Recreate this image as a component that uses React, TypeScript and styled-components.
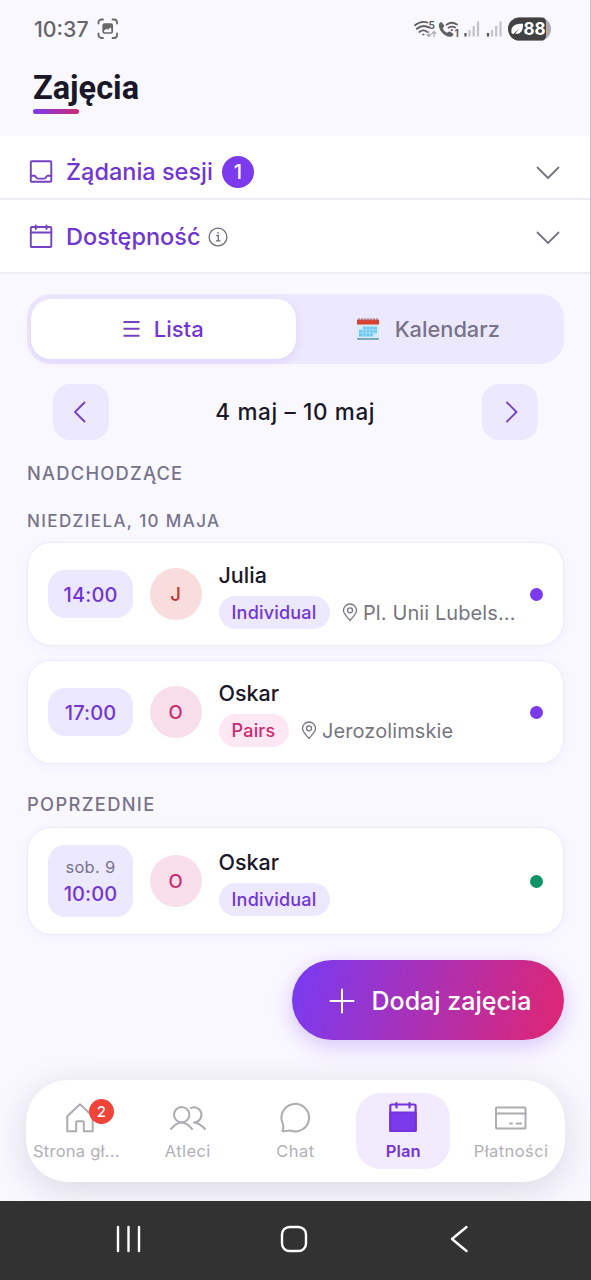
import React from 'react';
import styled, { createGlobalStyle, css } from 'styled-components';

const violet = '#7136d2';
const ink = '#1a1828';
const muted = '#77738a';
const lilac = '#ece8fd';

const GlobalStyle = createGlobalStyle`
  * { box-sizing: border-box; }
  body { margin: 0; background: #f9f8ff; font-family: Inter, "Noto Sans", sans-serif; }
`;

const Screen = styled.div`
  width: 591px;
  height: 1280px;
  display: flex;
  flex-direction: column;
  overflow: hidden;
`;

const AppArea = styled.div`
  height: 1201px;
  flex: none;
  display: flex;
  flex-direction: column;
  background: #f9f8ff;
  border-right: 1px solid #c3c1cc;
  overflow: hidden;
`;

interface TextProps {
  $size: number;
  $weight?: number;
  $spacing?: number;
  $color?: string;
  $line?: number;
}

const Text = styled.span<TextProps>`
  font-size: ${p => p.$size}px;
  font-weight: ${p => p.$weight ?? 500};
  letter-spacing: ${p => p.$spacing ?? 0}px;
  color: ${p => p.$color ?? ink};
  line-height: ${p => p.$line ?? 28}px;
  white-space: nowrap;
`;

const StatusBar = styled.div`
  height: 57px;
  flex: none;
  padding: 0 38px 0 34px;
  display: flex;
  align-items: center;
  justify-content: space-between;
`;

const StatusGroup = styled.div`
  display: flex;
  align-items: center;
  gap: 8px;
`;

const Header = styled.header`
  height: 79px;
  flex: none;
  padding: 11px 0 0 33px;
`;

const Title = styled.h1`
  margin: 0;
  font: 700 32.5px/40px Roboto, sans-serif;
  color: ${ink};
`;

const TitleRule = styled.div`
  width: 46px;
  height: 5px;
  margin-top: 1px;
  border-radius: 3px;
  background: linear-gradient(90deg, #7c3aed, #cf2a74);
`;

const Panel = styled.section`
  flex: none;
  height: 138px;
  background: #fff;
  border-bottom: 2px solid #ededf4;
`;

const PanelRow = styled.div<{ $first?: boolean }>`
  display: flex;
  align-items: center;
  padding: 0 30px 0 29px;
  height: ${p => (p.$first ? 64 : 72)}px;
  ${p => (p.$first ? css`padding-top: 10px; border-bottom: 2px solid #ededf4;` : css`padding-top: 1px;`)}
`;

const RowIcon = styled.div`
  width: 37px;
  height: 26px;
`;

const InfoSlot = styled.div`
  display: flex;
  margin-left: 8px;
`;

const Count = styled.span`
  width: 32px;
  height: 32px;
  margin-left: 9px;
  border-radius: 50%;
  background: #7c3aed;
  display: flex;
  align-items: center;
  justify-content: center;
`;

const PushRight = styled.div`
  margin-left: auto;
  padding-top: 2px;
  display: flex;
`;

const Content = styled.main`
  flex: none;
  display: flex;
  flex-direction: column;
  padding: 20px 26px 0 27px;
`;

const Segmented = styled.div`
  height: 70px;
  display: flex;
  padding: 5px 4px;
  border-radius: 24px;
  background: ${lilac};
`;

const Segment = styled.div<{ $active?: boolean; $gap: number }>`
  flex: 1;
  height: 60px;
  display: flex;
  align-items: center;
  justify-content: center;
  gap: ${p => p.$gap}px;
  border-radius: 20px;
  ${p => p.$active && css`
    background: #fff;
    box-shadow: 0 3px 10px rgba(124, 58, 237, 0.11);
  `}
`;

const WeekNav = styled.div`
  display: flex;
  align-items: center;
  justify-content: space-between;
  margin-top: 20px;
  padding: 0 26px 0 25.5px;
`;

const WeekButton = styled.div`
  width: 56px;
  height: 56px;
  border-radius: 17px;
  background: ${lilac};
  display: flex;
  align-items: center;
  justify-content: center;
`;

const SectionLabel = styled.div<{ $top: number; $height: number }>`
  margin-top: ${p => p.$top}px;
  height: ${p => p.$height}px;
  display: flex;
  align-items: center;
`;

const Card = styled.article<{ $top: number; $height?: number }>`
  margin-top: ${p => p.$top}px;
  height: ${p => p.$height ?? 104}px;
  display: flex;
  align-items: center;
  padding: 0 20px 0 20px;
  border: 1.5px solid #eeebf8;
  border-radius: 24px;
  background: #fff;
  box-shadow: 0 2px 12px rgba(124, 58, 237, 0.05);
`;

const TimeChip = styled.div<{ $tall?: boolean }>`
  width: 85px;
  height: ${p => (p.$tall ? 72 : 48)}px;
  flex: none;
  padding-top: ${p => (p.$tall ? 0 : 2)}px;
  border-radius: 17px;
  background: ${lilac};
  display: flex;
  flex-direction: column;
  align-items: center;
  justify-content: center;
`;

const Avatar = styled.div<{ $bg: string }>`
  width: 52px;
  height: 52px;
  flex: none;
  margin: 0 17px 0 16.5px;
  border-radius: 50%;
  background: ${p => p.$bg};
  display: flex;
  align-items: center;
  justify-content: center;
`;

const Details = styled.div`
  display: flex;
  flex-direction: column;
  gap: 7px;
  padding-top: 2px;
`;

const Meta = styled.div`
  display: flex;
  align-items: center;
`;

const Tag = styled.span<{ $pink?: boolean }>`
  height: 33px;
  padding-top: 1px;
  width: ${p => (p.$pink ? 70 : 111)}px;
  border-radius: 17px;
  display: flex;
  align-items: center;
  justify-content: center;
  background: ${p => (p.$pink ? '#fce7f3' : lilac)};
`;

const Place = styled.span`
  margin-left: 12px;
  display: flex;
  align-items: center;
  gap: 5.5px;
`;

const Dot = styled.span<{ $color: string }>`
  width: 13px;
  height: 13px;
  margin-left: auto;
  border-radius: 50%;
  background: ${p => p.$color};
`;

const AddButton = styled.div`
  align-self: flex-end;
  width: 272px;
  height: 80px;
  margin-top: 25px;
  border-radius: 40px;
  display: flex;
  align-items: center;
  padding: 1px 0 0 37px;
  gap: 16.5px;
  background: linear-gradient(105deg, #7c3aed 5%, #db2777 95%);
  box-shadow: 0 6px 22px rgba(124, 58, 237, 0.28);
`;

const TabBar = styled.nav`
  flex: none;
  width: 539px;
  height: 102px;
  margin: 40px 0 0 26px;
  border-radius: 42px;
  background: #fff;
  box-shadow: 0 8px 36px rgba(30, 28, 40, 0.14);
  display: flex;
  align-items: center;
`;

const TabCell = styled.div`
  flex: 1;
  display: flex;
  justify-content: center;
`;

const TabItem = styled.div<{ $active?: boolean }>`
  width: 94px;
  height: 76px;
  border-radius: 25px;
  background: ${p => (p.$active ? '#f2eafd' : 'transparent')};
  display: flex;
  flex-direction: column;
  align-items: center;
  padding-top: 7px;
  gap: 5px;
`;

const TabLabel = styled(Text)<{ $trail?: number }>`
  padding-right: ${p => p.$trail ?? 0}px;
`;

const TabIcon = styled.div`
  position: relative;
  height: 36px;
`;

const TabBadge = styled.span`
  position: absolute;
  left: 27px;
  top: -1px;
  width: 25px;
  height: 25px;
  border-radius: 50%;
  background: #f04438;
  display: flex;
  align-items: center;
  justify-content: center;
`;

const SystemNav = styled.div`
  height: 79px;
  flex: none;
  background: #323232;
  display: grid;
  grid-template-columns: 167px 163px auto;
  align-items: center;
  padding: 0 0 3px 113px;
`;

const Chevron = ({ d, w, h, color, stroke }: { d: string; w: number; h: number; color: string; stroke: number }) => (
  <svg width={w} height={h} viewBox={`0 0 ${w} ${h}`} fill="none" stroke={color} strokeWidth={stroke} strokeLinecap="round" strokeLinejoin="round">
    <path d={d} />
  </svg>
);

const CaptureIcon = () => (
  <svg width="22" height="22" viewBox="0 0 22 22" fill="none" stroke="#686868" strokeWidth="1.8" strokeLinecap="round">
    <path d="M1.500 5.500V4.500a3 3 0 0 1 3-3H6M15.500 1.500h1.500a3 3 0 0 1 3 3v1M20 15.500v1.500a3 3 0 0 1-3 3H15.500M6 20H4.500a3 3 0 0 1-3-3v-1.500" />
    <rect x="6.200" y="6.200" width="9" height="8.800" rx="1.300" strokeWidth="1.700" />
    <path d="M6.500 6.500h9v5l-2.300-2-2.100 2.300-1.500-1.100-3.100 2.300z" fill="#686868" stroke="none" />
  </svg>
);

const StatusIcons = () => (
  <svg width="139" height="26" viewBox="413 15.500 139 26" fill="none" strokeLinecap="round">
    <g stroke="#606060" strokeWidth="1.8">
      <path d="M415 24.800q6-5 12.500-2.800M416.800 28.300q6-5 12.500-1.200M419.300 31.500q4-3.200 8 0" />
      <circle cx="423.200" cy="34" r=".6" fill="#606060" strokeWidth="1" />
    </g>
    <text x="428.500" y="28.300" fontSize="10" fontWeight="700" fill="#606060" fontFamily="Inter">5</text>
    <path d="M428.800 31v5m-2-2 2 2 2-2M434 36v-5m-2 2 2-2 2 2" stroke="#b0b0b4" strokeWidth="1.3" />
    <path d="M441.500 21.500c-2 .2-3 2-2.500 4.500 1 5.500 6 10 10.500 10.300 2.100.1 3.900-1.200 3.900-2.900l-3.800-2.600-2.500 1.500c-1.900-1-3.600-2.700-4.300-4.600l1.700-2.400z" fill="#606060" />
    <path d="M446.500 24.300q5-4 10.500-.3M448.500 27.300q3.300-2.300 6.600-.2" stroke="#606060" strokeWidth="1.8" />
    <circle cx="451.800" cy="29.600" r="1.100" fill="#606060" />
    <text x="454.500" y="36.800" fontSize="10" fontWeight="700" fill="#606060" fontFamily="Inter">1</text>
    <g strokeWidth="2.200" strokeLinecap="butt">
      <path d="M465.500 32.500v3.500M488 32.500v3.500" stroke="#555" />
      <path d="M469.500 29.500V36M473.700 25.500V36M478 21V36M492 29.500V36M496.200 25.500V36M500.500 21V36" stroke="#c2c2c8" />
    </g>
    <rect x="508" y="17" width="43" height="23" rx="11.500" fill="#aaaab0" />
    <path d="M519.500 17H543q3 1 3 5v13q0 4-3 5h-23.500a11.500 11.500 0 0 1 0-23z" fill="#424242" />
    <path d="M511.500 32.500c-1-7.500 4-9.500 11.500-9.300.3 7-2.500 11-8 10l4.500-5.500-6.500 6z" fill="#fff" />
    <text x="523.500" y="34.800" fontSize="17" fontWeight="700" fill="#fff" fontFamily="Inter" textLength="22">88</text>
  </svg>
);

const InboxIcon = () => (
  <svg width="24" height="24" viewBox="0 0 24 24" fill="none" stroke="#7541c4" strokeWidth="1.9" strokeLinejoin="round">
    <rect x="1.800" y="2.300" width="20.500" height="20.500" rx="1" />
    <path d="M1.800 16.700h3.700c1.400 0 1.400 2.900 3.500 2.900h6.100c2.100 0 2.100-2.900 3.500-2.900h3.700" />
  </svg>
);

const CalendarIcon = () => (
  <svg width="24" height="25" viewBox="0 0 24 25" fill="none" stroke="#7541c4" strokeWidth="1.9" strokeLinejoin="round" strokeLinecap="round">
    <rect x="1.800" y="3" width="20.500" height="20" rx="1" />
    <path d="M1.800 8.500h20.500M6.800 1.500v3.500M17.500 1.500v3.500" />
  </svg>
);

const InfoIcon = () => (
  <svg width="20" height="20" viewBox="0 0 20 20" fill="none" stroke="#6f6d78" strokeWidth="1.3">
    <circle cx="10" cy="10" r="8.900" />
    <path d="M8.300 8.500h2v5.200M8 13.900h4.600" />
    <circle cx="10" cy="5.800" r=".9" fill="#6f6d78" stroke="none" />
  </svg>
);

const MenuIcon = () => (
  <svg width="17" height="18" viewBox="0 0 17 18" stroke="#7541c4" strokeWidth="2.1">
    <path d="M.5 2h16M.5 8.800h16M.5 15.700h16" />
  </svg>
);

const SpiralCalendar = () => (
  <svg width="24" height="24" viewBox="0 0 24 24">
    <path d="M1.500 6h21l.5 15.500a1 1 0 0 1-1 1H2a1 1 0 0 1-1-1z" fill="#d5ecf7" />
    <path d="M1 21.300h22v.4a1 1 0 0 1-1 1H2a1 1 0 0 1-1-1z" fill="#5d93a6" />
    <path d="M1.500 2.500h21q.5 0 .5.500v4.500H1V3q0-.5.500-.5z" fill="#d8412f" />
    <path d="M3 1v2.600M6 1v2.600M9 1v2.600M12 1v2.600M15 1v2.600M18 1v2.600M21 1v2.600" stroke="#8b7480" strokeWidth="1" />
    <path d="M7 9.500h14v7H7zM3 12.500h4v7H3zM7 16h10v3.500H7z" fill="#6cc8f0" />
    <path d="M3 12.700h18M3 16h18M6.800 9v11M10.300 9v11M13.800 9v11M17.300 9v11" stroke="#c3e8f8" strokeWidth=".6" />
  </svg>
);

const PinIcon = () => (
  <svg width="16" height="20" viewBox="0 0 16 20" fill="none" stroke="#77757f" strokeWidth="1.3" strokeLinejoin="round">
    <path d="M8 17.500C5.500 14.500 1.500 10.800 1.500 7.500a6.500 6.500 0 0 1 13 0C14.500 10.800 10.500 14.500 8 17.500z" />
    <circle cx="8" cy="7.300" r="2.500" />
  </svg>
);

const PlusIcon = () => (
  <svg width="26" height="26" viewBox="0 0 26 26" stroke="#fff" strokeWidth="2" strokeLinecap="round">
    <path d="M13 1.500v23M1.500 13h23" />
  </svg>
);

const tabStroke = { fill: 'none', stroke: '#acacb2', strokeWidth: 2, strokeLinejoin: 'round' as const, strokeLinecap: 'round' as const };

const HomeIcon = () => (
  <svg width="36" height="36" viewBox="0 0 36 36" {...tabStroke}>
    <path d="M5.300 16.300 18 4.200l12.700 12.100v15h-8.900v-9q0-1-1-1h-5.600q-1 0-1 1v9H5.300z" />
  </svg>
);

const PeopleIcon = () => (
  <svg width="38" height="36" viewBox="0 0 38 36" {...tabStroke}>
    <circle cx="12.700" cy="14.700" r="7.700" />
    <path d="M2 29q10.500-13 21 0M21.800 8.100a7.500 7.500 0 1 1 3.200 14.300q6 .8 11 6.600" />
  </svg>
);

const ChatIcon = () => (
  <svg width="36" height="36" viewBox="0 0 36 36" {...tabStroke}>
    <path d="M5.300 31c1.300-2.300 1.400-4.600.7-7A13.800 13.800 0 1 1 14 30.800c-3-.9-5.800 1-8.700.2z" />
  </svg>
);

const PlanIcon = () => (
  <svg width="36" height="36" viewBox="0 0 36 36" fill="none" stroke="#7433dc" strokeWidth="2.2" strokeLinejoin="round" strokeLinecap="round">
    <rect x="5.300" y="4.500" width="25.300" height="26.500" rx="1.500" />
    <path d="M5.300 12.500h25.300V31H5.300z" fill="#7c3aed" />
    <path d="M11.500 3v4.500M24.500 3v4.500" />
  </svg>
);

const CardIcon = () => (
  <svg width="36" height="36" viewBox="0 0 36 36" {...tabStroke}>
    <rect x="3" y="7.500" width="29.500" height="21" rx=".8" />
    <path d="M3 13.500h29.500M17 23.500h2M23.500 23.500h4.500" />
  </svg>
);

const tabs = [
  { label: 'Strona gł...', icon: <HomeIcon />, badge: '2', spacing: 0.25, trail: 7 },
  { label: 'Atleci', icon: <PeopleIcon />, spacing: 0.4 },
  { label: 'Chat', icon: <ChatIcon />, spacing: 0.5 },
  { label: 'Plan', icon: <PlanIcon />, active: true, spacing: 0.1 },
  { label: 'Płatności', icon: <CardIcon />, spacing: 0.4 },
];

interface Session {
  day?: string;
  time: string;
  name: string;
  pair?: boolean;
  place?: string;
  top: number;
  height?: number;
  dot: string;
}

const SessionCard = ({ s }: { s: Session }) => (
  <Card $top={s.top} $height={s.height}>
    <TimeChip $tall={!!s.day}>
      {s.day && <Text $size={16.5} $weight={400} $spacing={0.3} $line={25} $color={muted}>{s.day}</Text>}
      <Text $size={20} $spacing={0.1} $line={28} $color={violet}>{s.time}</Text>
    </TimeChip>
    <Avatar $bg={s.name === 'Julia' ? '#f9dddd' : '#f9dfea'}>
      <Text $size={18.5} $color={s.name === 'Julia' ? '#c03238' : '#c92c72'}>{s.name[0]}</Text>
    </Avatar>
    <Details>
      <Text $size={21.5}>{s.name}</Text>
      <Meta>
        <Tag $pink={s.pair}>
          <Text $size={18} $spacing={0.2} $color={s.pair ? '#cb2a70' : violet}>{s.pair ? 'Pairs' : 'Individual'}</Text>
        </Tag>
        {s.place && (
          <Place>
            <PinIcon />
            <Text $size={20} $weight={400} $spacing={0.1} $color="#77757f">{s.place}</Text>
          </Place>
        )}
      </Meta>
    </Details>
    <Dot $color={s.dot} />
  </Card>
);

export default function App() {
  return (
    <Screen>
      <GlobalStyle />
      <AppArea>
        <StatusBar>
          <StatusGroup>
            <Text $size={21.3} $color="#666568">10:37</Text>
            <CaptureIcon />
          </StatusGroup>
          <StatusIcons />
        </StatusBar>
        <Header>
          <Title>Zajęcia</Title>
          <TitleRule />
        </Header>
        <Panel>
          <PanelRow $first>
            <RowIcon><InboxIcon /></RowIcon>
            <Text $size={23.5} $color={violet}>Żądania sesji</Text>
            <Count><Text $size={20} $color="#fff">1</Text></Count>
            <PushRight><Chevron d="M1.500 1.500 12 12 22.500 1.500" w={24} h={14} color="#77757f" stroke={1.8} /></PushRight>
          </PanelRow>
          <PanelRow>
            <RowIcon><CalendarIcon /></RowIcon>
            <Text $size={23.5} $color={violet}>Dostępność</Text>
            <InfoSlot><InfoIcon /></InfoSlot>
            <PushRight><Chevron d="M1.500 1.500 12 12 22.500 1.500" w={24} h={14} color="#77757f" stroke={1.8} /></PushRight>
          </PanelRow>
        </Panel>
        <Content>
          <Segmented>
            <Segment $active $gap={14}>
              <MenuIcon />
              <Text $size={22} $color={violet}>Lista</Text>
            </Segment>
            <Segment $gap={15}>
              <SpiralCalendar />
              <Text $size={21.8} $color={muted}>Kalendarz</Text>
            </Segment>
          </Segmented>
          <WeekNav>
            <WeekButton><Chevron d="M11.500 1.500 2 11l9.500 9.500" w={15} h={22} color="#7541c4" stroke={1.9} /></WeekButton>
            <Text $size={22.5} $spacing={0.65}>4 maj – 10 maj</Text>
            <WeekButton><Chevron d="M4 1.500 13.500 11 4 20.500" w={15} h={22} color="#7541c4" stroke={1.9} /></WeekButton>
          </WeekNav>
          <SectionLabel $top={20} $height={26}><Text $size={18.3} $spacing={1.25} $color={muted}>NADCHODZĄCE</Text></SectionLabel>
          <SectionLabel $top={22} $height={26}><Text $size={17} $spacing={1.38} $color={muted}>NIEDZIELA, 10 MAJA</Text></SectionLabel>
          <SessionCard s={{ top: 8, time: '14:00', name: 'Julia', place: 'Pl. Unii Lubels...', dot: '#7c3aed' }} />
          <SessionCard s={{ top: 14, time: '17:00', name: 'Oskar', pair: true, place: 'Jerozolimskie', dot: '#7c3aed' }} />
          <SectionLabel $top={27} $height={26}><Text $size={18.3} $spacing={1.35} $color={muted}>POPRZEDNIE</Text></SectionLabel>
          <SessionCard s={{ top: 10, height: 108, day: 'sob. 9', time: '10:00', name: 'Oskar', dot: '#0f9467' }} />
          <AddButton>
            <PlusIcon />
            <Text $size={25} $color="#fff">Dodaj zajęcia</Text>
          </AddButton>
        </Content>
        <TabBar>
          {tabs.map(t => (
            <TabCell key={t.label}>
              <TabItem $active={t.active}>
                <TabIcon>
                  {t.icon}
                  {t.badge && <TabBadge><Text $size={15} $color="#fff">{t.badge}</Text></TabBadge>}
                </TabIcon>
                <TabLabel $size={16.5} $line={20} $weight={t.active ? 600 : 400} $spacing={t.spacing} $trail={t.trail} $color={t.active ? violet : '#b0b0b6'}>{t.label}</TabLabel>
              </TabItem>
            </TabCell>
          ))}
        </TabBar>
      </AppArea>
      <SystemNav>
        <svg width="30" height="28" viewBox="0 0 30 28" stroke="#fff" strokeWidth="2.4" strokeLinecap="round"><path d="M5 2v24M15.500 2v24M26 2v24" /></svg>
        <svg width="28" height="28" viewBox="0 0 28 28" fill="none" stroke="#fff" strokeWidth="2.4"><rect x="2" y="2" width="24" height="24" rx="7.500" /></svg>
        <svg width="28" height="28" viewBox="0 0 28 28" fill="none" stroke="#fff" strokeWidth="2.4" strokeLinecap="round" strokeLinejoin="round"><path d="M23.500 2 9 14l14.500 12" /></svg>
      </SystemNav>
    </Screen>
  );
}
